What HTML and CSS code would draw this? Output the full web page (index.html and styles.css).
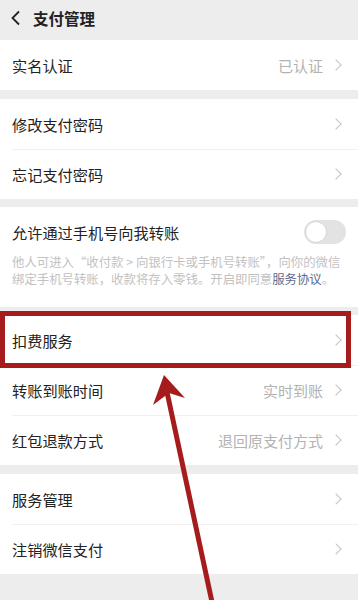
FILE: index.html
```html
<!DOCTYPE html>
<html lang="zh-CN">

<head>
    <meta charset="UTF-8">
    <meta name="viewport" content="width=device-width, initial-scale=1.0">
    <title>支付管理</title>
    <link rel="stylesheet" href="styles.css">
</head>

<body>
    <div class="page">

        <!-- Top bar -->
        <div class="topbar">
            <svg class="back" width="12" height="16" viewBox="0 0 12 16">
                <path d="M9 1.5 L2.5 8 L9 14.5" fill="none" stroke="#222" stroke-width="1.8" />
            </svg>
            <span class="title">支付管理</span>
        </div>

        <div class="group">
            <div class="row">
                <span class="label">实名认证</span>
                <span class="value">已认证</span>
                <span class="chev"></span>
            </div>
        </div>

        <div class="group gap-lg">
            <div class="row">
                <span class="label">修改支付密码</span>
                <span class="chev"></span>
            </div>
            <div class="row line">
                <span class="label">忘记支付密码</span>
                <span class="chev"></span>
            </div>
        </div>

        <div class="group gap-sm">
            <div class="switch-row">
                <span class="label">允许通过手机号向我转账</span>
                <span class="toggle"><span class="knob"></span></span>
            </div>
            <p class="desc">他人可进入“收付款 &gt; 向银行卡或手机号转账”，向你的微信绑定手机号转账，收款将存入零钱。开启即同意<span class="link">服务协议</span>。</p>
        </div>

        <div class="group gap-sm">
            <div class="row">
                <span class="label">扣费服务</span>
                <span class="chev"></span>
            </div>
            <div class="row line">
                <span class="label">转账到账时间</span>
                <span class="value">实时到账</span>
                <span class="chev"></span>
            </div>
            <div class="row line">
                <span class="label">红包退款方式</span>
                <span class="value">退回原支付方式</span>
                <span class="chev"></span>
            </div>
        </div>

        <div class="group gap-lg">
            <div class="row">
                <span class="label">服务管理</span>
                <span class="chev"></span>
            </div>
            <div class="row line">
                <span class="label">注销微信支付</span>
                <span class="chev"></span>
            </div>
        </div>

        <!-- annotation drawn over the screen -->
        <svg class="mark" width="358" height="600" viewBox="0 0 358 600">
            <rect x="2.5" y="313.5" width="346" height="52" fill="none" stroke="#a61b1b" stroke-width="5" />
            <line x1="212" y1="602" x2="167" y2="392" stroke="#a61b1b" stroke-width="5" />
            <polygon points="164,375 185,398 169,393 153,405" fill="#a61b1b" />
        </svg>
    </div>
</body>

</html>
```

FILE: styles.css
```css
/*--------------Page-------------*/
body {
    margin: 0;
    background-color: #ededed;
    font-family: "Noto Sans CJK SC", "Noto Sans", sans-serif;
    color: #222;
}

.page {
    position: relative;
    width: 358px;
    height: 600px;
    overflow: hidden;
}

/*--------------Top bar-------------*/
.topbar {
    height: 40px;
    display: flex;
    align-items: center;
    padding-left: 10px;
    box-sizing: border-box;
    padding-bottom: 4px;
}

.back {
    margin-right: 11px;
}

.title {
    font-size: 15.5px;
    font-weight: bold;
}

/*--------------Groups-------------*/
.group {
    background-color: #fff;
}

.gap-lg {
    margin-top: 9px;
}

.gap-sm {
    margin-top: 8px;
}

.row {
    height: 50px;
    display: flex;
    align-items: center;
    padding: 0 15px 0 12px;
    position: relative;
}

.row.line::before {
    content: "";
    position: absolute;
    left: 12px;
    right: 0;
    top: 0;
    border-top: 1px solid #f0f0f0;
}

.label {
    font-size: 15.2px;
    flex: 1;
    white-space: nowrap;
}

.value {
    font-size: 15px;
    color: #b2b2b2;
    margin-right: 9px;
}

.chev {
    width: 7px;
    height: 7px;
    border-top: 1.3px solid #c4c4c4;
    border-right: 1.3px solid #c4c4c4;
    transform: rotate(45deg);
    margin-right: 3px;
}

/*--------------Switch-------------*/
.switch-row {
    display: flex;
    align-items: center;
    padding: 13px 12px 0 12px;
    height: 24px;
}

.toggle {
    width: 42px;
    height: 24px;
    border-radius: 12px;
    background-color: #e3e3e3;
    position: relative;
}

.knob {
    position: absolute;
    left: 1px;
    top: 1px;
    width: 20px;
    height: 20px;
    border-radius: 50%;
    background-color: #fff;
    border: 1px solid #d4d4d4;
}

.desc {
    margin: 0;
    padding: 10px 16px 19px 12px;
    font-size: 12.4px;
    line-height: 17px;
    color: #c2c2c2;
}

.link {
    color: #5c6b8a;
}

/*--------------Annotation-------------*/
.mark {
    position: absolute;
    left: 0;
    top: 0;
}
```
